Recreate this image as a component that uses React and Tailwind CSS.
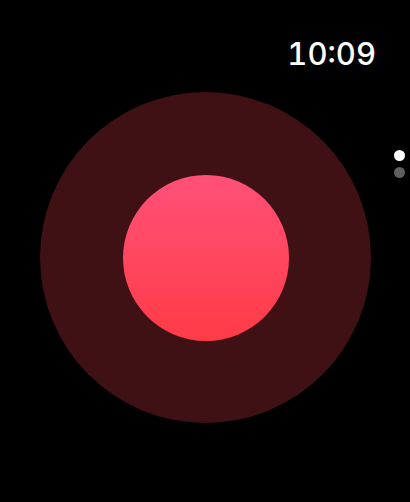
export default function App() {
  return (
    <div
      className="relative w-[410px] h-[502px] bg-black overflow-hidden flex flex-col"
      style={{ fontFamily: "Inter, 'Noto Sans', sans-serif" }}
    >
      {/* status bar */}
      <div className="flex justify-end pr-[34px] pt-[36px] h-[92px]">
        <span className="text-white text-[31px] leading-[36px] font-medium tabular-nums">
          10:09
        </span>
      </div>

      {/* record button */}
      <div className="flex pl-[40px]">
        <div className="w-[331px] h-[331px] rounded-full bg-[#3f1114] flex items-center justify-center">
          <div className="w-[166px] h-[166px] rounded-full bg-gradient-to-b from-[#ff5077] to-[#ff3b46]" />
        </div>
      </div>

      {/* page dots */}
      <div className="absolute right-[5px] top-[150px] flex flex-col gap-[6px]">
        <div className="w-[11px] h-[11px] rounded-full bg-white" />
        <div className="w-[11px] h-[11px] rounded-full bg-[#5e5e5e]" />
      </div>
    </div>
  );
}
